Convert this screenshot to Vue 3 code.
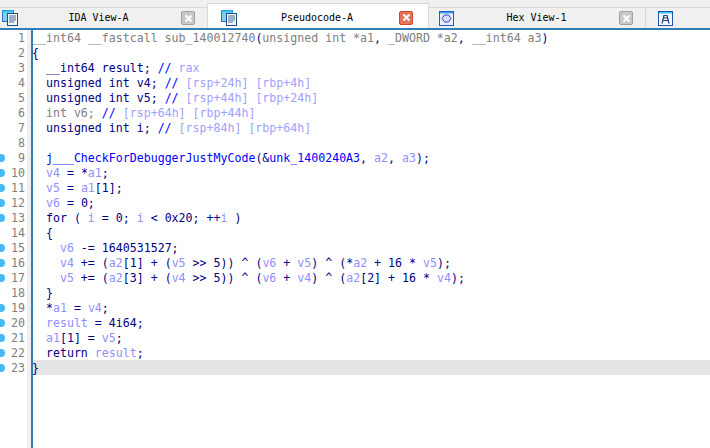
<script setup>
const V = 'v', K = 'k', C = 'c', G = 'g', N = 'n'
const lines = [
  [[N, '__int64 __fastcall sub_140012740'], [K, '('], [N, 'unsigned int *a1'], [K, ','], [N, ' _DWORD *a2'], [K, ','], [N, ' __int64 a3'], [K, ')']],
  [[K, '{']],
  [[K, '  __int64 result; '], [C, '// '], [G, 'rax']],
  [[K, '  unsigned int v4; '], [C, '// '], [G, '[rsp+24h] [rbp+4h]']],
  [[K, '  unsigned int v5; '], [C, '// '], [G, '[rsp+44h] [rbp+24h]']],
  [[N, '  int v6; '], [C, '// '], [G, '[rsp+64h] [rbp+44h]']],
  [[K, '  unsigned int i; '], [C, '// '], [G, '[rsp+84h] [rbp+64h]']],
  [],
  [[K, '  '], [C, 'j___CheckForDebuggerJustMyCode'], [K, '(&'], [C, 'unk_1400240A3'], [K, ', '], [V, 'a2'], [K, ', '], [V, 'a3'], [K, ');']],
  [[K, '  '], [V, 'v4'], [K, ' = *'], [V, 'a1'], [K, ';']],
  [[K, '  '], [V, 'v5'], [K, ' = '], [V, 'a1'], [K, '[1];']],
  [[K, '  '], [V, 'v6'], [K, ' = 0;']],
  [[K, '  for ( '], [V, 'i'], [K, ' = 0; '], [V, 'i'], [K, ' < 0x20; ++'], [V, 'i'], [K, ' )']],
  [[K, '  {']],
  [[K, '    '], [V, 'v6'], [K, ' -= 1640531527;']],
  [[K, '    '], [V, 'v4'], [K, ' += ('], [V, 'a2'], [K, '[1] + ('], [V, 'v5'], [K, ' >> 5)) ^ ('], [V, 'v6'], [K, ' + '], [V, 'v5'], [K, ') ^ (*'], [V, 'a2'], [K, ' + 16 * '], [V, 'v5'], [K, ');']],
  [[K, '    '], [V, 'v5'], [K, ' += ('], [V, 'a2'], [K, '[3] + ('], [V, 'v4'], [K, ' >> 5)) ^ ('], [V, 'v6'], [K, ' + '], [V, 'v4'], [K, ') ^ ('], [V, 'a2'], [K, '[2] + 16 * '], [V, 'v4'], [K, ');']],
  [[K, '  }']],
  [[K, '  *'], [V, 'a1'], [K, ' = '], [V, 'v4'], [K, ';']],
  [[K, '  '], [V, 'result'], [K, ' = 4i64;']],
  [[K, '  '], [V, 'a1'], [K, '[1] = '], [V, 'v5'], [K, ';']],
  [[K, '  return '], [V, 'result'], [K, ';']],
  [[K, '}']]
]
const dotted = new Set([9, 10, 11, 12, 13, 15, 16, 17, 19, 20, 21, 22, 23])
</script>

<template>
  <div class="app">
    <div class="topstrip"></div>
    <div class="tabs">
      <div class="tab t1">
        <svg class="ico" viewBox="0 0 16 16" width="16" height="16">
          <rect x="0.5" y="0.5" width="11" height="11" fill="#7fd0f8" stroke="#2a6fd0" />
          <rect x="0.5" y="0.5" width="11" height="2" fill="#35c8f0" />
          <rect x="5.5" y="3.5" width="10" height="12" fill="#f4f6fa" stroke="#1f4f86" />
          <path d="M7 6h7M7 8h7M7 10h7M7 12h5" stroke="#4a6a90" />
        </svg>
        <span class="label">IDA View-A</span>
        <span class="close off"><svg viewBox="0 0 9 9" width="9" height="9"><path d="M1.5 1.5l6 6M7.5 1.5l-6 6" stroke="#fff" stroke-width="2" /></svg></span>
      </div>
      <div class="tab t2 active">
        <svg class="ico" viewBox="0 0 16 16" width="16" height="16">
          <rect x="0.5" y="0.5" width="11" height="11" fill="#7fd0f8" stroke="#2a6fd0" />
          <rect x="0.5" y="0.5" width="11" height="2" fill="#35c8f0" />
          <rect x="5.5" y="3.5" width="10" height="12" fill="#f4f6fa" stroke="#1f4f86" />
          <path d="M7 6h7M7 8h7M7 10h7M7 12h5" stroke="#4a6a90" />
        </svg>
        <span class="label">Pseudocode-A</span>
        <span class="close on"><svg viewBox="0 0 9 9" width="9" height="9"><path d="M1.5 1.5l6 6M7.5 1.5l-6 6" stroke="#fff" stroke-width="2" /></svg></span>
      </div>
      <div class="tab t3">
        <svg class="ico" viewBox="0 0 15 15" width="15" height="15">
          <rect x="0.5" y="0.5" width="14" height="14" fill="#e8effc" stroke="#2a55d8" />
          <rect x="1" y="1" width="13" height="1.5" fill="#35a8f0" />
          <path d="M5.5 4l4 0 2.5 3.5-2.5 3.5h-4l-2.5-3.5z" fill="#d8dcfa" stroke="#3a3fd0" />
        </svg>
        <span class="label">Hex View-1</span>
        <span class="close off"><svg viewBox="0 0 9 9" width="9" height="9"><path d="M1.5 1.5l6 6M7.5 1.5l-6 6" stroke="#fff" stroke-width="2" /></svg></span>
      </div>
      <div class="tab t4">
        <svg class="ico" viewBox="0 0 15 15" width="15" height="15">
          <rect x="0.5" y="0.5" width="14" height="14" fill="#f4f7fc" stroke="#1f55b0" />
          <rect x="1" y="1" width="13" height="1.5" fill="#35c8f0" />
          <path d="M5.5 4.5h4M6 4.5l-2 8M9 4.5l2 8M4.5 9.5h6M5.5 7h4" fill="none" stroke="#1f3f80" stroke-width="1.2" />
        </svg>
      </div>
    </div>
    <div class="body">
      <div class="gutter">
        <div v-for="(l, i) in lines" :key="i" class="num">
          <i v-if="dotted.has(i + 1)" class="dot"></i>
          <span>{{ i + 1 }}</span>
        </div>
      </div>
      <div class="strip"></div>
      <div class="code">
        <div v-for="(l, i) in lines" :key="i" class="line" :class="{ cur: i === 22 }">
          <span v-for="(t, j) in l" :key="j" :class="t[0]">{{ t[1] }}</span>
        </div>
      </div>
    </div>
  </div>
</template>

<style scoped>
.app {
  width: 710px;
  height: 448px;
  display: flex;
  flex-direction: column;
  background: #fff;
  overflow: hidden;
}
.topstrip {
  height: 7px;
  flex: none;
  background: #f0f0f0;
  border-bottom: 1px solid #d9d9d9;
}
.tabs {
  height: 20px;
  flex: none;
  display: flex;
  background: #f0f0f0;
  border-bottom: 2px solid #2f7fb5;
}
.tab {
  display: flex;
  align-items: center;
  height: 20px;
  border-right: 1px solid #d9d9d9;
  box-sizing: border-box;
}
.t1 { width: 207px; padding-left: 2px; border-right: 0; }
.t2 { width: 222px; padding-left: 13px; }
.t3 { width: 217px; padding-left: 10px; }
.t4 { flex: 1; padding-left: 12px; border-right: 0; }
.active {
  background: #fff;
  height: 25px;
  margin-top: -5px;
  border: 1px solid #d9d9d9;
  border-bottom: 0;
  padding-top: 3px;
}
.ico { flex: none; }
.label {
  flex: 1;
  text-align: center;
  font: 10px/14px "DejaVu Sans Mono", monospace;
  color: #000;
}
.t1 .label, .t2 .label { margin-right: 2px; }
.close {
  flex: none;
  box-sizing: border-box;
  width: 14px;
  height: 14px;
  border-radius: 2px;
  display: flex;
  align-items: center;
  justify-content: center;
}
.t1 .close { margin-right: 12px; }
.t2 .close { margin-right: 15px; }
.t3 .close { margin-right: 12px; }
.off { background: #c8c8c8; border: 1px solid #a0a0a0; }
.on { background: #e8735a; border: 1px solid #d0482c; }
.body {
  flex: 1;
  display: flex;
  min-height: 0;
  font: 11.6px/15px "DejaVu Sans Mono", monospace;
}
.gutter { width: 27px; flex: none; }
.num {
  box-sizing: border-box;
  height: 15px;
  padding-top: 1px;
  position: relative;
  text-align: right;
  padding-right: 2px;
  color: #808080;
}
.dot {
  position: absolute;
  left: -3px;
  top: 4px;
  width: 8px;
  height: 8px;
  border-radius: 50%;
  background: #45b8f5;
}
.strip {
  width: 4px;
  flex: none;
  background: #f0f0f0;
}
.code {
  flex: 1;
  border-left: 2px solid #2f7fb5;
}
.line {
  box-sizing: border-box;
  height: 15px;
  padding-top: 1px;
  white-space: pre;
  text-indent: -1px;
}
.cur { background: #e4e4e4; }
.k { color: #000080; }
.v { color: #8f8fff; }
.c { color: #0000ff; }
.g { color: #a0a0ff; }
.n { color: #808080; }
</style>
